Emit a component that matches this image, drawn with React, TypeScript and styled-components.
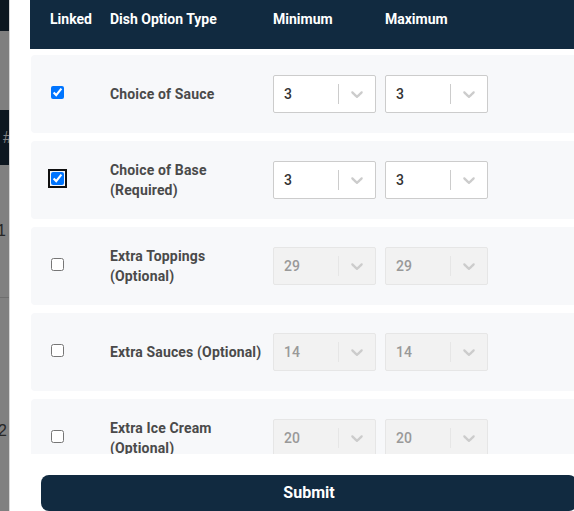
import React from "react";
import styled, { createGlobalStyle } from "styled-components";

const GlobalStyle = createGlobalStyle`
  html, body { margin: 0; padding: 0; }
  body {
    font-family: Roboto, "Liberation Sans", Arial, sans-serif;
    overflow: hidden;
    background: #ffffff;
  }
  * { box-sizing: border-box; }
`;

const Page = styled.div`
  display: flex;
  width: 574px;
  height: 511px;
  overflow: hidden;
`;

/* ---- dimmed page behind the modal ---- */
const Backdrop = styled.div`
  width: 9px;
  flex-shrink: 0;
  display: flex;
  flex-direction: column;
  overflow: hidden;
  background: #808080;
  font-family: "Liberation Sans", Arial, sans-serif;
  font-size: 16px;
  line-height: 18px;
`;

const BackBand = styled.div<{ $h: number; $dark?: boolean }>`
  height: ${(p) => p.$h}px;
  flex-shrink: 0;
  background: ${(p) => (p.$dark ? "#0d1720" : "#7f7f7f")};
`;

const BackHead = styled.div`
  height: 55px;
  flex-shrink: 0;
  display: flex;
  align-items: center;
  padding-left: 3px;
  background: #0d1720;
  color: #858585;
  white-space: nowrap;
`;

const BackRow = styled.div<{ $h: number; $pad: number; $shift: number; $line?: boolean }>`
  height: ${(p) => p.$h}px;
  flex-shrink: 0;
  padding-top: ${(p) => p.$pad}px;
  margin-left: ${(p) => p.$shift}px;
  color: #262626;
  white-space: nowrap;
  border-bottom: ${(p) => (p.$line ? "1px solid #6e6e6e" : "none")};
`;

/* ---- modal ---- */
const Modal = styled.div`
  flex: 1;
  min-width: 0;
  display: flex;
  flex-direction: column;
  background: #ffffff;
  border-left: 1px solid #d6d6d6;
  padding-left: 20px;
`;

const ScrollArea = styled.div`
  width: 560px;
  height: 454px;
  flex-shrink: 0;
  overflow: hidden;
`;

const columns = "60px 163px 112px 112px 1fr";

const TableHead = styled.div`
  display: grid;
  grid-template-columns: ${columns};
  height: 49px;
  padding: 10px 0 0 20px;
  background: #112a40;
  color: #ffffff;
  font-size: 14px;
  font-weight: 700;
  line-height: 18px;
`;

const RowList = styled.div`
  display: flex;
  flex-direction: column;
  gap: 8px;
  padding-top: 6px;
`;

const Card = styled.div`
  display: grid;
  grid-template-columns: ${columns};
  align-items: center;
  height: 78px;
  flex-shrink: 0;
  margin-left: 1px;
  padding-left: 19px;
  background: #f7f8fa;
  border-radius: 4px;
`;

const Check = styled.input<{ $focused?: boolean }>`
  display: block;
  width: 13px;
  height: 13px;
  margin: 0 0 3px 1px;
  ${(p) =>
    p.$focused
      ? `outline: 2px solid #101010; outline-offset: 1px; border-radius: 3px;`
      : ""}
`;

const DishName = styled.div`
  padding-right: 8px;
  font-size: 14px;
  font-weight: 700;
  letter-spacing: 0.15px;
  line-height: 20px;
  color: #4a4a4a;
`;

const SelectBox = styled.div<{ $disabled?: boolean }>`
  width: 103px;
  height: 38px;
  display: flex;
  align-items: stretch;
  border: 1px solid ${(p) => (p.$disabled ? "#e6e6e6" : "#cccccc")};
  background: ${(p) => (p.$disabled ? "#f2f2f2" : "#ffffff")};
  border-radius: 2px;
`;

const SelectValue = styled.div<{ $disabled?: boolean }>`
  flex: 1;
  display: flex;
  align-items: center;
  padding: 0 10px;
  font-size: 14px;
  font-weight: 500;
  color: ${(p) => (p.$disabled ? "#999999" : "#333333")};
`;

const Separator = styled.span<{ $disabled?: boolean }>`
  width: 1px;
  margin: 8px 0;
  background: ${(p) => (p.$disabled ? "#e6e6e6" : "#cccccc")};
`;

const Indicator = styled.span`
  display: flex;
  align-items: center;
  padding: 8px;
  color: #cccccc;
`;

const Footer = styled.div`
  margin-top: 21px;
  padding-left: 11px;
`;

const SubmitButton = styled.button`
  width: 536px;
  height: 36px;
  padding: 0 0 2px;
  border: none;
  border-radius: 8px;
  background: #112a40;
  color: #ffffff;
  font-family: Roboto, "Liberation Sans", Arial, sans-serif;
  font-size: 16px;
  font-weight: 700;
  cursor: pointer;
`;

const Chevron = () => (
  <svg width="20" height="20" viewBox="0 0 20 20" fill="currentColor" aria-hidden="true">
    <path d="M4.516 7.548c0.436-0.446 1.043-0.481 1.576 0l3.908 3.747 3.908-3.747c0.533-0.481 1.141-0.446 1.574 0 0.436 0.445 0.408 1.197 0 1.615-0.406 0.418-4.695 4.502-4.695 4.502-0.217 0.223-0.502 0.335-0.787 0.335s-0.57-0.112-0.789-0.335c0 0-4.287-4.084-4.695-4.502s-0.436-1.17 0-1.615z" />
  </svg>
);

const Select = ({ value, disabled }: { value: number; disabled?: boolean }) => (
  <SelectBox $disabled={disabled}>
    <SelectValue $disabled={disabled}>{value}</SelectValue>
    <Separator $disabled={disabled} />
    <Indicator>
      <Chevron />
    </Indicator>
  </SelectBox>
);

type Option = {
  name: string;
  linked: boolean;
  focused?: boolean;
  min: number;
  max: number;
};

const options: Option[] = [
  { name: "Choice of Sauce", linked: true, min: 3, max: 3 },
  { name: "Choice of Base (Required)", linked: true, focused: true, min: 3, max: 3 },
  { name: "Extra Toppings (Optional)", linked: false, min: 29, max: 29 },
  { name: "Extra Sauces (Optional)", linked: false, min: 14, max: 14 },
  { name: "Extra Ice Cream (Optional)", linked: false, min: 20, max: 20 },
];

export default function App() {
  return (
    <>
      <GlobalStyle />
      <Page>
        <Backdrop>
          <BackBand $h={31} $dark />
          <BackBand $h={79} />
          <BackHead>#</BackHead>
          <BackRow $h={133} $pad={57} $shift={-3} $line>
            1
          </BackRow>
          <BackRow $h={220} $pad={124} $shift={-2}>
            2
          </BackRow>
        </Backdrop>
        <Modal>
          <ScrollArea>
            <TableHead>
              <span>Linked</span>
              <span>Dish Option Type</span>
              <span>Minimum</span>
              <span>Maximum</span>
              <span />
            </TableHead>
            <RowList>
              {options.map((o) => (
                <Card key={o.name}>
                  <div>
                    <Check type="checkbox" defaultChecked={o.linked} $focused={o.focused} />
                  </div>
                  <DishName>{o.name}</DishName>
                  <Select value={o.min} disabled={!o.linked} />
                  <Select value={o.max} disabled={!o.linked} />
                  <span />
                </Card>
              ))}
            </RowList>
          </ScrollArea>
          <Footer>
            <SubmitButton>Submit</SubmitButton>
          </Footer>
        </Modal>
      </Page>
    </>
  );
}
